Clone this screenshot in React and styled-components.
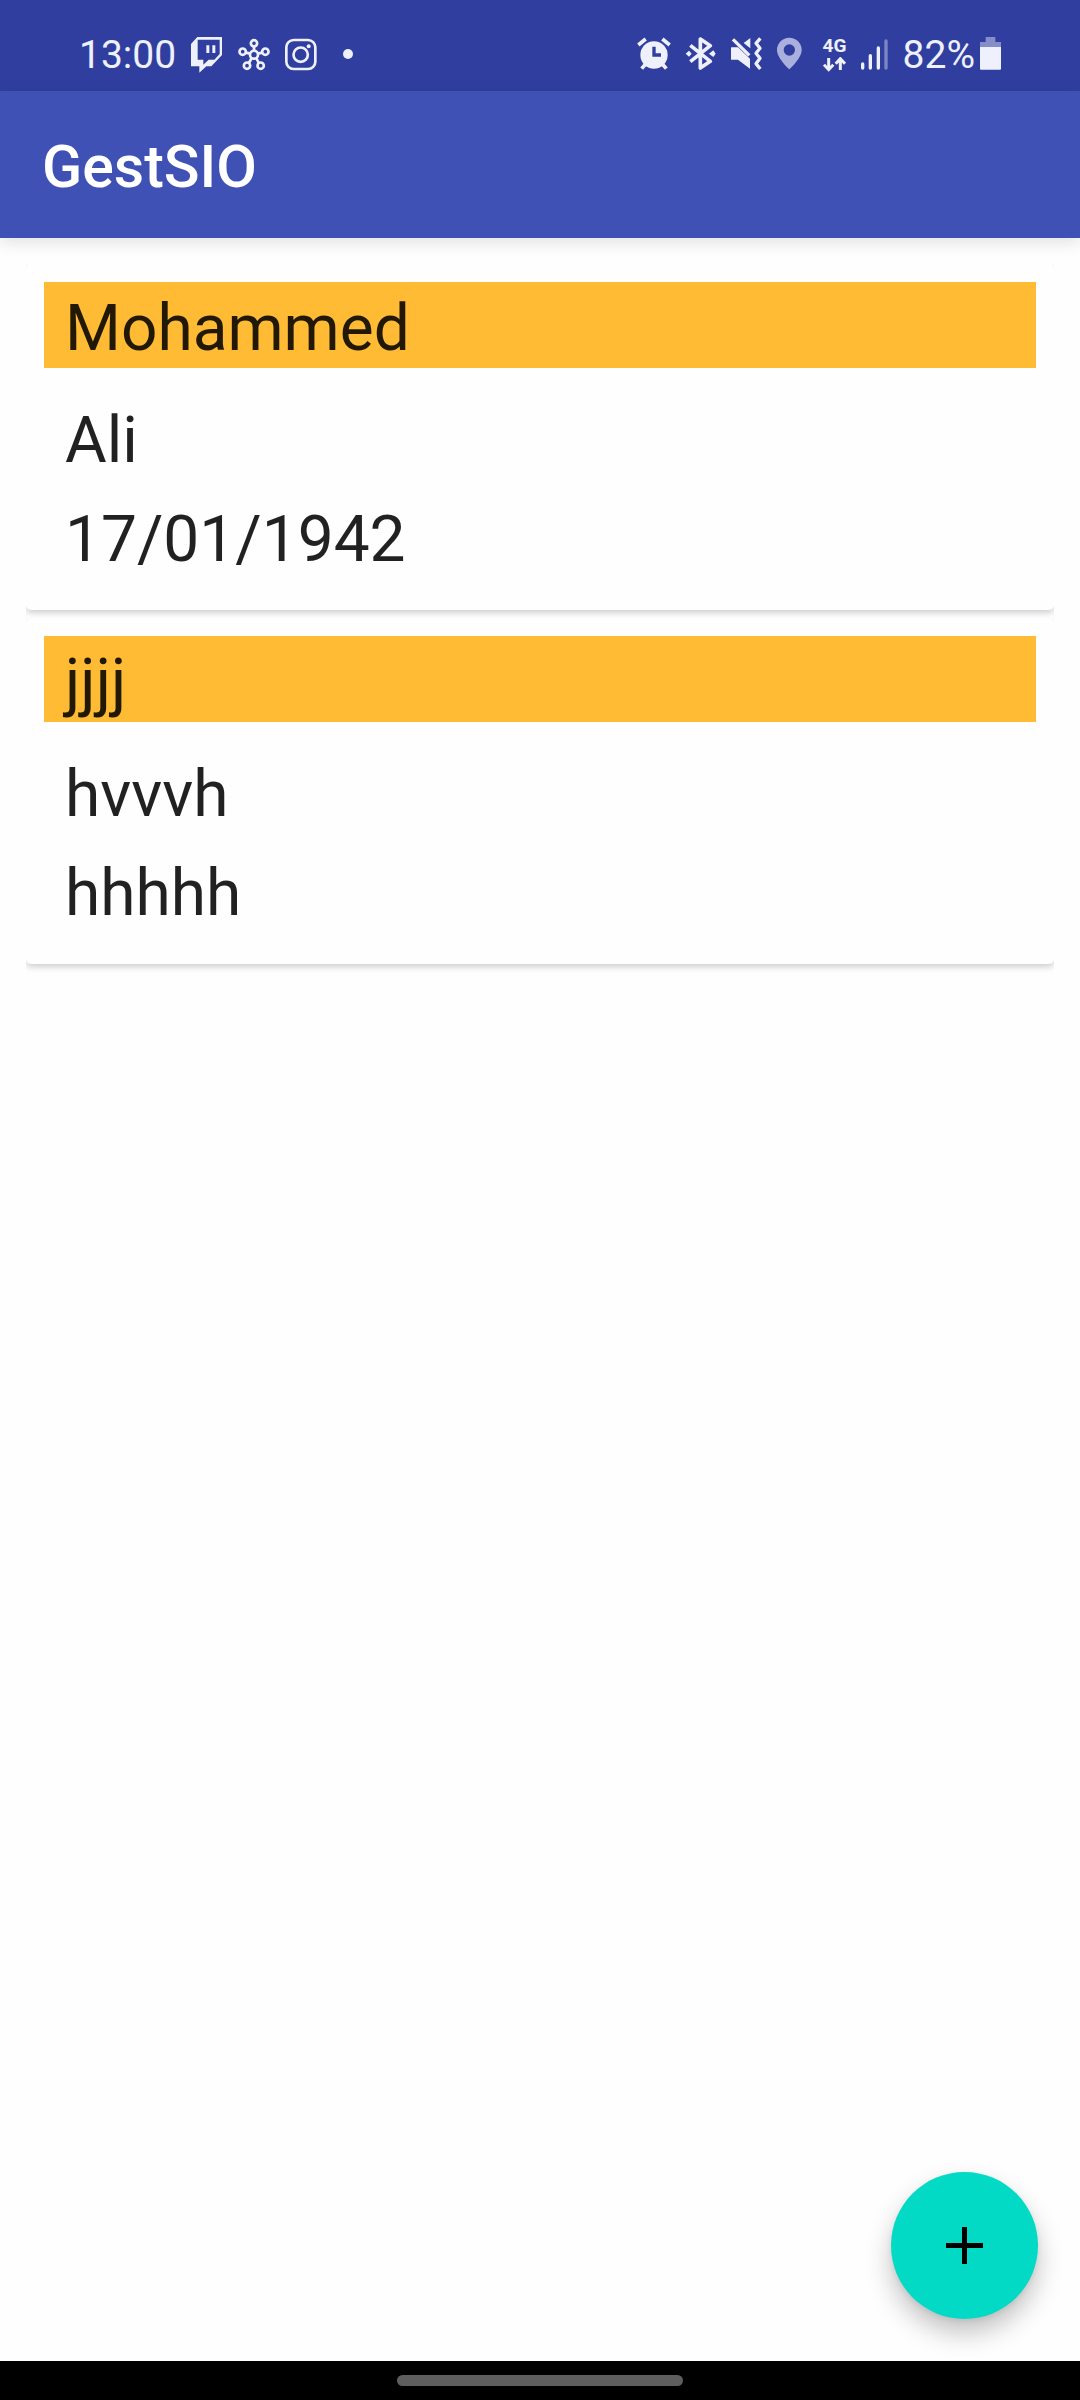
import React from "react";
import styled, { createGlobalStyle } from "styled-components";

const GlobalStyle = createGlobalStyle`
  *, *::before, *::after { box-sizing: border-box; }
  body {
    margin: 0;
    background: #fefefe;
    color: rgba(0, 0, 0, 0.87);
    font-family: Roboto, "Noto Sans", sans-serif;
  }
`;

const INK = "#eef0fb";
const STATUS_BG = "#303f9f";

const Screen = styled.div`
  display: flex;
  flex-direction: column;
  min-height: 100vh;
`;

const StatusBar = styled.div`
  display: flex;
  justify-content: space-between;
  align-items: center;
  height: 91px;
  padding: 19px 78px 0 79px;
  background: ${STATUS_BG};
  color: ${INK};
  font-size: 39px;
  line-height: 46px;
`;

const StatusGroup = styled.div`
  display: flex;
  align-items: center;
  gap: ${(p) => p.$gap}px;
`;

const Glyph = styled.svg`
  display: block;
  flex: none;
  fill: ${INK};
`;

const Network = styled.div`
  display: flex;
  flex-direction: column;
  gap: 2px;
  width: 24px;
  font-size: 19px;
  font-weight: 700;
  line-height: 18px;
`;

const AppBar = styled.header`
  position: relative;
  display: flex;
  align-items: center;
  height: 147px;
  padding: 4px 42px 0;
  background: #3f51b5;
  box-shadow: 0 4px 16px rgba(0, 0, 0, 0.12);
`;

const Title = styled.h1`
  margin: 0;
  color: #fff;
  font-size: 59px;
  font-weight: 500;
  line-height: 68px;
`;

const Content = styled.main`
  flex: 1;
`;

const CardList = styled.ul`
  display: flex;
  flex-direction: column;
  gap: 8px;
  margin: 0;
  padding: 26px;
  list-style: none;
`;

const Card = styled.li`
  padding: 18px 18px 31px;
  border-radius: 5px;
  background: #fefefe;
  box-shadow: 0 3px 6px rgba(0, 0, 0, 0.19);
  clip-path: inset(0 0 -12px 0);
  font-size: 64px;
  line-height: 78px;
`;

const CardTitle = styled.h2`
  margin: 0 0 34px;
  padding: 8px 21px 0;
  background: #ffbb33;
  font-size: inherit;
  font-weight: 400;
`;

const CardBody = styled.div`
  display: flex;
  flex-direction: column;
  gap: 21px;
  padding: 0 21px;
`;

const Line = styled.p`
  margin: 0;
`;

const AddButton = styled.button`
  position: fixed;
  right: 42px;
  bottom: 81px;
  display: grid;
  place-items: center;
  width: 147px;
  height: 147px;
  padding: 0;
  border: 0;
  border-radius: 50%;
  background: #03dac5;
  box-shadow: 0 14px 26px rgba(0, 0, 0, 0.24), 0 2px 6px rgba(0, 0, 0, 0.08);
  cursor: pointer;
`;

const NavBar = styled.footer`
  display: flex;
  justify-content: center;
  align-items: center;
  height: 39px;
  background: #000;
`;

const Handle = styled.div`
  width: 286px;
  height: 11px;
  border-radius: 6px;
  background: #5e5e5e;
`;

const TwitchIcon = () => (
  <Glyph width="32" height="36" viewBox="396 51 96 108" aria-hidden="true">
    <path
      fillRule="evenodd"
      d="M396 72 415 51H489V105L457 139H442L421 158V139H396ZM416 59V119H433V134L449 119H466L482 102V59Z"
    />
    <path d="M442 76h9v23h-9zM460 76h9v23h-9z" />
  </Glyph>
);

const HubIcon = () => (
  <Glyph width="32" height="36" viewBox="535 51 96 108" aria-hidden="true">
    <g fill="none" stroke={INK} strokeWidth="8">
      <circle cx="583" cy="104" r="12" />
      <circle cx="583" cy="70" r="9.5" />
      <circle cx="549" cy="95" r="9.5" />
      <circle cx="617" cy="95" r="9.5" />
      <circle cx="562" cy="137" r="9.5" />
      <circle cx="603" cy="137" r="9.5" />
      <path d="M583 80V93M558 98 572 101M608 98 594 101M568 129 576 114M597 129 590 114" />
    </g>
  </Glyph>
);

const InstagramIcon = () => (
  <Glyph width="32" height="36" viewBox="677 51 96 108" aria-hidden="true">
    <rect x="681" y="60" width="87" height="87" rx="22" fill="none" stroke={INK} strokeWidth="8" />
    <circle cx="724" cy="104" r="21.5" fill="none" stroke={INK} strokeWidth="8" />
    <circle cx="748" cy="79" r="6" />
  </Glyph>
);

const DotIcon = () => (
  <Glyph width="32" height="36" viewBox="815 51 96 108" aria-hidden="true">
    <circle cx="863" cy="102" r="15" />
  </Glyph>
);

const AlarmIcon = () => (
  <Glyph width="34" height="36" viewBox="51 51 102 108" aria-hidden="true">
    <circle cx="102" cy="105" r="41" />
    <path d="M55 75 77 57M127 57 149 75M65 146 77 132M139 146 127 132" stroke={INK} strokeWidth="11" />
    <path d="M102 80V105H123" fill="none" stroke={STATUS_BG} strokeWidth="10" />
  </Glyph>
);

const BluetoothIcon = () => (
  <Glyph width="32" height="36" viewBox="195 51 96 108" aria-hidden="true">
    <path
      d="M211 76 271 124 241 144V57L271 77 211 125"
      fill="none"
      stroke={INK}
      strokeWidth="11"
      strokeLinejoin="round"
    />
    <path d="M197 101 207 92 215 101 207 110ZM287 101 280 91 267 101 280 111Z" />
  </Glyph>
);

const MuteVibrateIcon = () => (
  <Glyph width="32" height="36" viewBox="333 51 96 108" aria-hidden="true">
    <path d="M331 87Q331 82 336 82H354L390 116V146L354 119H336Q331 119 331 114Z" />
    <path d="M339 58 388 106" stroke={INK} strokeWidth="10" />
    <path d="M391 54V85L371 69Z" />
    <path
      d="M421 55 408 70 420 85 408 100 420 115 408 131 421 147"
      fill="none"
      stroke={INK}
      strokeWidth="10"
      strokeLinejoin="round"
    />
  </Glyph>
);

const PinIcon = () => (
  <Glyph width="32" height="36" viewBox="471 51 96 108" aria-hidden="true">
    <path
      fill="#aab0dd"
      fillRule="evenodd"
      d="M508 53A37 37 0 0 0 471 90C471 115 508 148 508 148S545 115 545 90A37 37 0 0 0 508 53ZM508 73A17 17 0 0 1 508 107A17 17 0 0 1 508 73Z"
    />
  </Glyph>
);

const DataArrowsIcon = () => (
  <Glyph width="24" height="16" viewBox="69 111 72 48" aria-hidden="true">
    <path
      d="M86 114V149M72 134 86 149 100 134M121 150V115M107 131 121 116 135 131"
      fill="none"
      stroke={INK}
      strokeWidth="9"
    />
  </Glyph>
);

const SignalIcon = () => (
  <Glyph width="28" height="36" viewBox="183 51 84 108" aria-hidden="true">
    <g stroke={INK} strokeWidth="10" strokeLinecap="round">
      <path d="M188 132V144M211 107V144M235 84V144" />
      <path d="M258 63V144" opacity="0.4" />
    </g>
  </Glyph>
);

const BatteryIcon = () => (
  <Glyph width="22" height="36" viewBox="540 51 66 108" aria-hidden="true">
    <path opacity="0.45" d="M557 51H586V66H603V81H540V66H557Z" />
    <path d="M540 81H603V146Q603 149 600 149H543Q540 149 540 146Z" />
  </Glyph>
);

const PlusIcon = () => (
  <svg width="37" height="37" viewBox="0 0 37 37" aria-hidden="true">
    <path d="M18.5 0V37M0 18.5H37" stroke="#000" strokeWidth="5" />
  </svg>
);

const students = [
  { lastName: "Mohammed", details: ["Ali", "17/01/1942"] },
  { lastName: "jjjj", details: ["hvvvh", "hhhhh"] },
];

export default function App() {
  return (
    <Screen>
      <GlobalStyle />
      <StatusBar>
        <StatusGroup $gap={15}>
          <time>13:00</time>
          <TwitchIcon />
          <HubIcon />
          <InstagramIcon />
          <DotIcon />
        </StatusGroup>
        <StatusGroup $gap={14}>
          <AlarmIcon />
          <BluetoothIcon />
          <MuteVibrateIcon />
          <PinIcon />
          <Network>
            <span>4G</span>
            <DataArrowsIcon />
          </Network>
          <SignalIcon />
          <StatusGroup $gap={5}>
            <span>82%</span>
            <BatteryIcon />
          </StatusGroup>
        </StatusGroup>
      </StatusBar>
      <AppBar>
        <Title>GestSIO</Title>
      </AppBar>
      <Content>
        <CardList>
          {students.map((student) => (
            <Card key={student.lastName}>
              <CardTitle>{student.lastName}</CardTitle>
              <CardBody>
                {student.details.map((detail) => (
                  <Line key={detail}>{detail}</Line>
                ))}
              </CardBody>
            </Card>
          ))}
        </CardList>
      </Content>
      <AddButton type="button" aria-label="Add">
        <PlusIcon />
      </AddButton>
      <NavBar>
        <Handle />
      </NavBar>
    </Screen>
  );
}
